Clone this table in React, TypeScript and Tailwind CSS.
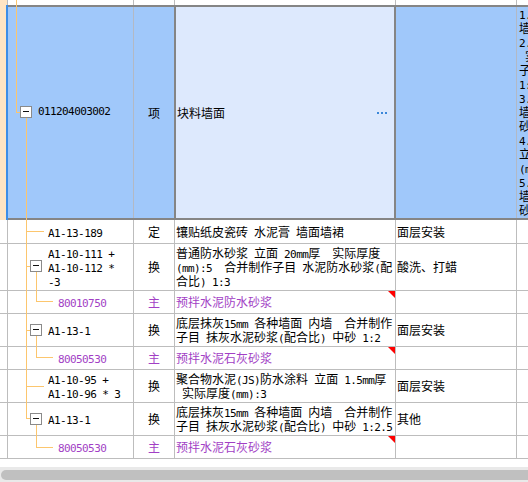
import React from "react";

const MONO = "font-['DejaVu_Sans_Mono',monospace] text-[11px] tracking-[-0.6px]";

function Mixed({ s }: { s: string }) {
  const parts = s.split(/([\x20-\x7e]+)/).filter((p) => p.length > 0);
  return (
    <>
      {parts.map((p, i) =>
        /^[\x20-\x7e]+$/.test(p) ? (
          <span key={i} className={MONO}>
            {p}
          </span>
        ) : (
          <span key={i}>{p}</span>
        )
      )}
    </>
  );
}

function Lines({ lines }: { lines: string[] }) {
  return (
    <div className="flex flex-col">
      {lines.map((l, i) => (
        <div key={i} className="h-[14px] leading-[14px] whitespace-pre">
          <Mixed s={l} />
        </div>
      ))}
    </div>
  );
}

type RowData = {
  h: string;
  c1: string[];
  level: number;
  c2: string;
  c3: string[];
  c4: string;
  purple?: boolean;
};

const rows: RowData[] = [
  { h: "h-[24px]", c1: ["A1-13-189"], level: 1, c2: "定", c3: ["镶贴纸皮瓷砖 水泥膏 墙面墙裙"], c4: "面层安装" },
  {
    h: "h-[47px]",
    c1: ["A1-10-111 +", "A1-10-112 *", "-3"],
    level: 1,
    c2: "换",
    c3: ["普通防水砂浆 立面 20mm厚  实际厚度", "(mm):5  合并制作子目 水泥防水砂浆(配", "合比) 1:3"],
    c4: "酸洗、打蜡",
  },
  { h: "h-[23px]", c1: ["80010750"], level: 2, c2: "主", c3: ["预拌水泥防水砂浆"], c4: "", purple: true },
  {
    h: "h-[33px]",
    c1: ["A1-13-1"],
    level: 1,
    c2: "换",
    c3: ["底层抹灰15mm 各种墙面 内墙  合并制作", "子目 抹灰水泥砂浆(配合比) 中砂 1:2"],
    c4: "面层安装",
  },
  { h: "h-[23px]", c1: ["80050530"], level: 2, c2: "主", c3: ["预拌水泥石灰砂浆"], c4: "", purple: true },
  {
    h: "h-[33px]",
    c1: ["A1-10-95 +", "A1-10-96 * 3"],
    level: 1,
    c2: "换",
    c3: ["聚合物水泥(JS)防水涂料 立面 1.5mm厚", " 实际厚度(mm):3"],
    c4: "面层安装",
  },
  {
    h: "h-[33px]",
    c1: ["A1-13-1"],
    level: 1,
    c2: "换",
    c3: ["底层抹灰15mm 各种墙面 内墙  合并制作", "子目 抹灰水泥砂浆(配合比) 中砂 1:2.5"],
    c4: "其他",
  },
  { h: "h-[23px]", c1: ["80050530"], level: 2, c2: "主", c3: ["预拌水泥石灰砂浆"], c4: "", purple: true },
];

const col5Lines = [
  "1.",
  "墙",
  "2.",
  " 实",
  "子",
  "1:",
  "3.",
  "墙",
  "砂",
  "4.",
  "立",
  "(m",
  "5.",
  "墙",
  "砂",
];

const ORANGE = "#fcc66e";

function V({ x, y1, y2 }: { x: number; y1: number; y2: number }) {
  return <rect x={x} y={y1} width={1} height={y2 - y1 + 1} fill={ORANGE} />;
}
function H({ y, x1, x2 }: { y: number; x1: number; x2: number }) {
  return <rect x={x1} y={y} width={x2 - x1 + 1} height={1} fill={ORANGE} />;
}
function Box({ x, y }: { x: number; y: number }) {
  return (
    <g>
      <rect x={x} y={y} width={12} height={12} fill="#8a8a8a" />
      <rect x={x + 1} y={y + 1} width={10} height={10} fill="#ffffff" />
      <rect x={x + 3} y={y + 5} width={6} height={1} fill="#111111" />
    </g>
  );
}

export default function App() {
  return (
    <div className="relative w-[528px] h-[482px] overflow-hidden bg-white font-['Noto_Sans_CJK_SC',sans-serif] text-[12px] text-black">
      <div className="flex flex-col w-[700px]">
        {/* previous row (partially visible) */}
        <div className="flex h-[5px]">
          <div className="w-[8px] bg-[#ffe5c4] border-r border-[#bdbdbd]" />
          <div className="w-[126px] border-r border-[#bdbdbd]" />
          <div className="w-[41px] border-r border-[#bdbdbd]" />
          <div className="w-[221px] border-r border-[#bdbdbd]" />
          <div className="w-[121px] border-r border-[#bdbdbd]" />
          <div className="flex-1" />
        </div>

        {/* selected row */}
        <div className="flex h-[215px]">
          <div className="w-[8px] bg-[#ffe5c4] border-r-2 border-[#3d8ee8]" />
          <div className="flex flex-1 border-y-2 border-[#858585] bg-[#a0c8fa]">
            <div className="w-[126px] border-r border-[#b3b9c4] flex items-center pl-[30px]">
              <span className={MONO}>011204003002</span>
            </div>
            <div className="w-[40px] flex items-center justify-center">项</div>
            <div className="w-[222px] border-x-2 border-[#858585] bg-[#dde9fd] flex items-center justify-between pl-[1px] pr-[7px]">
              <span>块料墙面</span>
              <span className="flex gap-[2px]">
                <span className="w-[2px] h-[2px] bg-[#3b87d9]" />
                <span className="w-[2px] h-[2px] bg-[#3b87d9]" />
                <span className="w-[2px] h-[2px] bg-[#3b87d9]" />
              </span>
            </div>
            <div className="w-[121px] border-r border-[#b3b9c4]" />
            <div className="w-[11px] pl-[2px] overflow-hidden">
              <Lines lines={col5Lines} />
            </div>
          </div>
        </div>

        {rows.map((r, i) => (
          <div key={i} className={"flex border-b border-[#bdbdbd] " + r.h}>
            <div className="w-[8px] border-r border-[#bdbdbd]" />
            <div
              className={
                "w-[126px] border-r border-[#bdbdbd] flex items-center " +
                (r.level === 2 ? "pl-[50px] text-[#a23fc5]" : "pl-[40px]")
              }
            >
              <Lines lines={r.c1} />
            </div>
            <div
              className={
                "w-[41px] border-r border-[#bdbdbd] flex items-center justify-center " +
                (r.purple ? "text-[#a23fc5]" : "")
              }
            >
              {r.c2}
            </div>
            <div
              className={
                "relative w-[221px] border-r border-[#bdbdbd] flex items-center pl-[1px] " +
                (r.purple ? "text-[#a23fc5]" : "")
              }
            >
              <Lines lines={r.c3} />
              {r.purple && (
                <svg className="absolute top-0 right-0" width="7" height="7" viewBox="0 0 7 7">
                  <polygon points="0,0 7,0 7,7" fill="#ff0000" />
                </svg>
              )}
            </div>
            <div className="w-[121px] border-r border-[#bdbdbd] flex items-center pl-[1px]">{r.c4}</div>
            <div className="flex-1" />
          </div>
        ))}
      </div>

      {/* gap + horizontal scrollbar */}
      <div className="h-[8px]" />
      <div className="h-[15px] bg-[#e9e9e9] pt-[3px] pl-[1px]">
        <div className="h-[10px] w-[600px] rounded-full bg-[#c0c0c0]" />
      </div>

      {/* tree connector lines */}
      <svg
        className="absolute left-0 top-0 pointer-events-none"
        width="528"
        height="482"
        viewBox="0 0 528 482"
        shapeRendering="crispEdges"
      >
        <V x={16} y1={0} y2={112} />
        <H y={112} x1={16} x2={19} />
        <V x={26} y1={118} y2={418} />
        <H y={231} x1={26} x2={43} />
        <H y={266} x1={26} x2={29} />
        <H y={330} x1={26} x2={29} />
        <H y={386} x1={26} x2={43} />
        <H y={418} x1={26} x2={29} />
        <V x={36} y1={272} y2={301} />
        <H y={301} x1={36} x2={52} />
        <V x={36} y1={336} y2={357} />
        <H y={357} x1={36} x2={52} />
        <V x={36} y1={425} y2={447} />
        <H y={447} x1={36} x2={52} />
        <Box x={20} y={106} />
        <Box x={30} y={260} />
        <Box x={30} y={324} />
        <Box x={30} y={413} />
      </svg>
    </div>
  );
}
